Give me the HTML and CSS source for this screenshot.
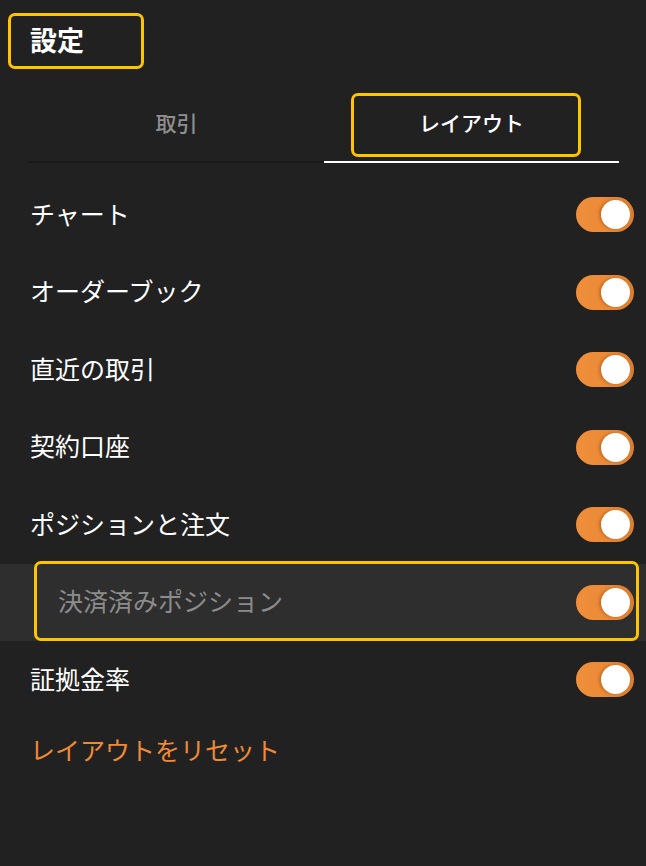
FILE: index.html
```html
<!DOCTYPE html>
<html lang="ja">
<head>
<meta charset="utf-8">
<link rel="stylesheet" href="styles.css">
</head>
<body>
<div class="screen">
  <header class="header">
    <h1 class="title">設定</h1>
  </header>
  <nav class="tabs">
    <div class="tab">取引</div>
    <div class="tab active">レイアウト<span class="mark mark-tab"></span></div>
  </nav>
  <ul class="list">
    <li class="row"><span class="label">チャート</span><span class="toggle"><span class="knob"></span></span></li>
    <li class="row"><span class="label">オーダーブック</span><span class="toggle"><span class="knob"></span></span></li>
    <li class="row"><span class="label">直近の取引</span><span class="toggle"><span class="knob"></span></span></li>
    <li class="row"><span class="label">契約口座</span><span class="toggle"><span class="knob"></span></span></li>
    <li class="row"><span class="label">ポジションと注文</span><span class="toggle"><span class="knob"></span></span></li>
    <li class="row row-selected"><span class="label">決済済みポジション</span><span class="toggle"><span class="knob"></span></span><span class="mark mark-row"></span></li>
    <li class="row"><span class="label">証拠金率</span><span class="toggle"><span class="knob"></span></span></li>
  </ul>
  <div class="reset">レイアウトをリセット</div>
</div>
</body>
</html>
```
FILE: styles.css
```css
html, body {
  margin: 0;
  padding: 0;
  background: #212121;
}
body {
  font-family: "Noto Sans CJK JP", "Noto Sans", sans-serif;
  color: #ffffff;
}
.screen {
  width: 646px;
  height: 866px;
  background: #212121;
}
.header {
  padding: 13px 0 0 8px;
  height: 80px;
  box-sizing: border-box;
}
.title {
  margin: 0;
  width: 136px;
  height: 56px;
  box-sizing: border-box;
  border: 3px solid #ffc400;
  border-radius: 7px;
  padding-left: 19px;
  font-size: 27px;
  font-weight: 700;
  line-height: 48px;
  color: #ffffff;
}
.tabs {
  display: flex;
  margin: 0 27px 0 29px;
  height: 83px;
}
.tab {
  flex: 1;
  position: relative;
  display: flex;
  align-items: center;
  justify-content: center;
  font-size: 21px;
  font-weight: 500;
  color: #8f8f8f;
  border-bottom: 2px solid #1a1a1a;
  padding-top: 3px;
  box-sizing: border-box;
}
.tab.active {
  color: #ffffff;
  border-bottom-color: #ffffff;
}
.mark {
  position: absolute;
  border: 3px solid #ffc400;
  border-radius: 7px;
  box-sizing: border-box;
  pointer-events: none;
}
.mark-tab {
  left: 27px;
  top: 13px;
  width: 230px;
  height: 64px;
}
.list {
  list-style: none;
  margin: 13px 0 0;
  padding: 0;
}
.row {
  position: relative;
  height: 77.5px;
  display: flex;
  align-items: center;
  justify-content: space-between;
  padding: 0 12px 0 30px;
  font-size: 25px;
  color: #ffffff;
}
.label {
  position: relative;
  top: -2px;
}
.row-selected {
  background: #2e2e2e;
  padding-left: 58px;
}
.row-selected .label {
  color: #8c8c8c;
}
.mark-row {
  left: 34px;
  right: 7px;
  top: -3px;
  bottom: 0;
}
.toggle {
  width: 58px;
  height: 35px;
  border-radius: 18px;
  background: linear-gradient(90deg, #ef8f3b 0%, #ec8a36 55%, #dd7c2c 100%);
  display: flex;
  align-items: center;
  justify-content: flex-end;
  padding-right: 4px;
  box-sizing: border-box;
}
.knob {
  width: 29px;
  height: 29px;
  border-radius: 50%;
  background: #ffffff;
  box-shadow: -2px 0 3px rgba(150, 70, 10, 0.45);
}
.reset {
  height: 60px;
  display: flex;
  align-items: center;
  padding: 0 0 2px 30px;
  font-size: 25px;
  color: #ee8a37;
}
```
